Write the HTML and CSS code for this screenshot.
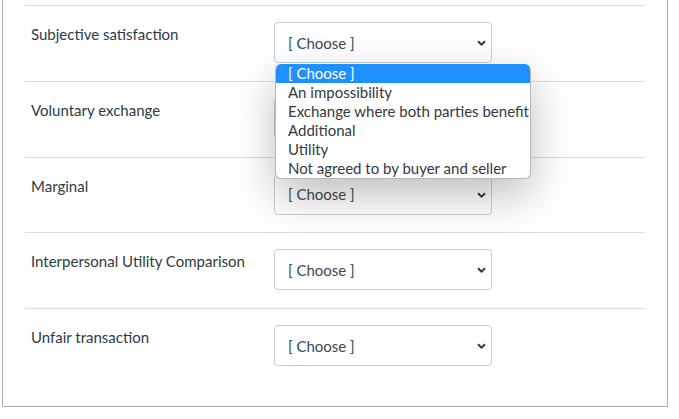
FILE: index.html
```html
<!DOCTYPE html>
<html lang="en">
<head>
<meta charset="utf-8">
<title>Matching question</title>
<link rel="stylesheet" href="styles.css">
</head>
<body>
<div class="panel">
  <div class="row">
    <div class="label">Subjective satisfaction</div>
    <div class="field">
      <div class="select"><span>[ Choose ]</span><svg class="chev" viewBox="0 0 9 6" width="9" height="6"><path d="M1 1.2 L4.5 4.6 L8 1.2" fill="none" stroke="#2d3b45" stroke-width="2"/></svg></div>
      <ul class="menu">
        <li class="active">[ Choose ]</li>
        <li>An impossibility</li>
        <li>Exchange where both parties benefit</li>
        <li>Additional</li>
        <li>Utility</li>
        <li>Not agreed to by buyer and seller</li>
      </ul>
    </div>
  </div>
  <div class="row">
    <div class="label">Voluntary exchange</div>
    <div class="field">
      <div class="select"><span>[ Choose ]</span><svg class="chev" viewBox="0 0 9 6" width="9" height="6"><path d="M1 1.2 L4.5 4.6 L8 1.2" fill="none" stroke="#2d3b45" stroke-width="2"/></svg></div>
    </div>
  </div>
  <div class="row">
    <div class="label">Marginal</div>
    <div class="field">
      <div class="select"><span>[ Choose ]</span><svg class="chev" viewBox="0 0 9 6" width="9" height="6"><path d="M1 1.2 L4.5 4.6 L8 1.2" fill="none" stroke="#2d3b45" stroke-width="2"/></svg></div>
    </div>
  </div>
  <div class="row">
    <div class="label">Interpersonal Utility Comparison</div>
    <div class="field">
      <div class="select"><span>[ Choose ]</span><svg class="chev" viewBox="0 0 9 6" width="9" height="6"><path d="M1 1.2 L4.5 4.6 L8 1.2" fill="none" stroke="#2d3b45" stroke-width="2"/></svg></div>
    </div>
  </div>
  <div class="row">
    <div class="label">Unfair transaction</div>
    <div class="field">
      <div class="select"><span>[ Choose ]</span><svg class="chev" viewBox="0 0 9 6" width="9" height="6"><path d="M1 1.2 L4.5 4.6 L8 1.2" fill="none" stroke="#2d3b45" stroke-width="2"/></svg></div>
    </div>
  </div>
</div>
</body>
</html>
```
FILE: styles.css
```css
html, body {
  margin: 0;
  padding: 0;
  background: #ffffff;
}

body {
  font-family: Lato, "Noto Sans", Arial, sans-serif;
  font-size: 15px;
  color: #2d3b45;
}

.panel {
  box-sizing: border-box;
  width: 666px;
  margin-left: 2px;
  border: 1px solid #a9a9a9;
  border-top: none;
  padding: 5px 22px 22px 22px;
}

.row {
  box-sizing: border-box;
  height: 75.75px;
  border-top: 1px solid #dcdcdc;
  padding: 16px 0 0 6px;
  display: grid;
  grid-template-columns: 243px 218px;
  align-items: start;
}

.label {
  padding-top: 2px;
  line-height: 20px;
}

.field {
  position: relative;
}

.select {
  box-sizing: border-box;
  height: 41px;
  border: 1px solid #c7cdd1;
  border-radius: 4px;
  padding: 0 5px 0 13px;
  display: flex;
  align-items: center;
  justify-content: space-between;
  color: #3b4a55;
  background: #ffffff;
}

.chev {
  display: block;
  margin-top: 1px;
}

.menu {
  position: absolute;
  z-index: 5;
  left: 1px;
  top: 42px;
  box-sizing: border-box;
  width: 256px;
  margin: 0;
  padding: 0;
  list-style: none;
  background: #ffffff;
  border: 1px solid #b8b8b8;
  border-top: none;
  border-radius: 6px;
  overflow: hidden;
  box-shadow: 0 16px 44px rgba(0, 0, 0, 0.26);
  color: #333a40;
}

.menu li {
  height: 19px;
  line-height: 19px;
  padding-left: 12px;
  white-space: nowrap;
}

.menu li.active {
  background: #1e90ff;
  color: #ffffff;
}
```
